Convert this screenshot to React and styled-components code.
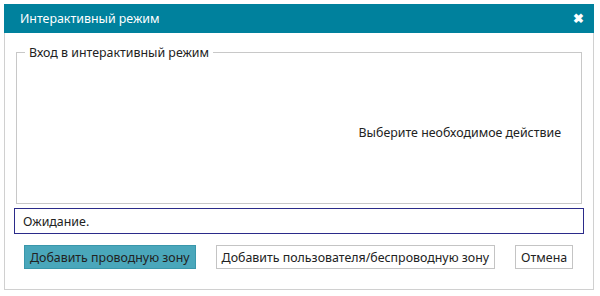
import React from 'react';
import styled, { createGlobalStyle } from 'styled-components';

const Global = createGlobalStyle`
  html, body {
    margin: 0;
    padding: 0;
    background: #ffffff;
  }
  body {
    font-family: "Noto Sans", "Open Sans", sans-serif;
    font-size: 12.4px;
    color: #222;
  }
`;

const Page = styled.div`
  padding: 4px 6px 6px 4px;
  width: 600px;
  height: 296px;
  box-sizing: border-box;
`;

const Dialog = styled.div`
  width: 590px;
  height: 286px;
  box-sizing: border-box;
  border: 1px solid #d0d0d0;
  border-top: none;
  display: flex;
  flex-direction: column;
`;

const Header = styled.div`
  height: 29px;
  background: #00819d;
  color: #fff;
  display: flex;
  align-items: center;
  justify-content: space-between;
  padding: 0 10px 0 16px;
  margin: 0 -1px;
`;

const Close = styled.span`
  font-size: 13px;
  font-weight: bold;
  line-height: 1;
`;

const Body = styled.div`
  flex: 1;
  padding: 11px 9px 0 9px;
  display: flex;
  flex-direction: column;
`;

const Group = styled.fieldset`
  margin: 0 2px;
  padding: 0 20px 0 8px;
  border: 1px solid #c8c8c8;
`;

const Legend = styled.legend`
  padding: 0 4px;
  color: #222;
`;

const GroupContent = styled.div`
  height: 142px;
  display: flex;
  align-items: center;
  justify-content: flex-end;
`;

const Status = styled.div`
  margin-top: 4px;
  height: 26px;
  box-sizing: border-box;
  border: 1px solid #2b2b8a;
  padding: 0 8px;
  display: flex;
  align-items: center;
`;

const Actions = styled.div`
  display: flex;
  gap: 20px;
  margin-top: 11px;
  padding-left: 10px;
`;

const Button = styled.button`
  height: 24px;
  box-sizing: border-box;
  font-family: inherit;
  font-size: 12.4px;
  color: #222;
  padding: 0 5px;
  border: 1px solid ${p => (p.$primary ? '#3a97ab' : '#c4c4c4')};
  background: ${p => (p.$primary ? '#4aa7bb' : '#ffffff')};
  white-space: nowrap;
`;

export default function App() {
  return (
    <Page>
      <Global />
      <Dialog>
        <Header>
          <span>Интерактивный режим</span>
          <Close>✖</Close>
        </Header>
        <Body>
          <Group>
            <Legend>Вход в интерактивный режим</Legend>
            <GroupContent>Выберите необходимое действие</GroupContent>
          </Group>
          <Status>Ожидание.</Status>
          <Actions>
            <Button $primary>Добавить проводную зону</Button>
            <Button>Добавить пользователя/беспроводную зону</Button>
            <Button>Отмена</Button>
          </Actions>
        </Body>
      </Dialog>
    </Page>
  );
}
